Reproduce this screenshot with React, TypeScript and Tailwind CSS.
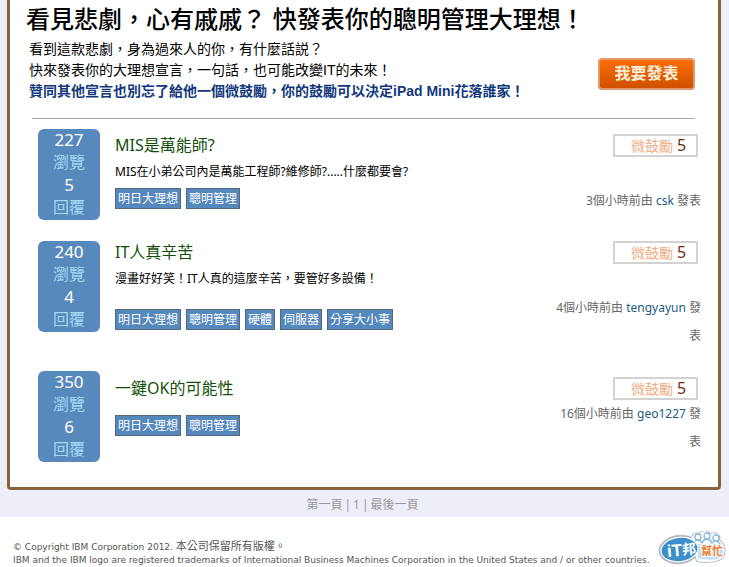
interface Post {
  views: number;
  replies: number;
  title: string;
  summary?: string;
  tags: string[];
  votes: number;
  age: string;
  author: string;
}

const posts: Post[] = [
  {
    views: 227,
    replies: 5,
    title: "MIS是萬能師?",
    summary: "MIS在小弟公司內是萬能工程師?維修師?.....什麼都要會?",
    tags: ["明日大理想", "聰明管理"],
    votes: 5,
    age: "3個小時前",
    author: "csk",
  },
  {
    views: 240,
    replies: 4,
    title: "IT人真辛苦",
    summary: "漫畫好好笑！IT人真的這麼辛苦，要管好多設備！",
    tags: ["明日大理想", "聰明管理", "硬體", "伺服器", "分享大小事"],
    votes: 5,
    age: "4個小時前",
    author: "tengyayun",
  },
  {
    views: 350,
    replies: 6,
    title: "一鍵OK的可能性",
    tags: ["明日大理想", "聰明管理"],
    votes: 5,
    age: "16個小時前",
    author: "geo1227",
  },
];

function PostRow({ post }: { post: Post }) {
  return (
    <li className="flex gap-[15px]">
      <div className="w-[62px] shrink-0 self-start rounded-md bg-[#5889bd] pb-px text-center text-base leading-[23px] text-[#a2d9f0]">
        <div className="text-[17px] leading-[22px] text-white">{post.views}</div>
        <div>瀏覽</div>
        <div className="text-[17px] leading-[22px] text-white">{post.replies}</div>
        <div>回覆</div>
      </div>
      <div className="flex min-w-0 flex-1 flex-col justify-center">
        <div className="flex items-center justify-between">
          <h2 className="text-base leading-[23px]">
            <a href="#" className="text-[#12500a]">{post.title}</a>
          </h2>
          <button
            type="button"
            className="mr-[3px] flex h-[23px] w-[85px] items-center justify-center gap-1 border-2 border-[#d2d2d2] pl-[6px] text-sm leading-[19px] text-[#efae84]"
          >
            微鼓勵
            <span className="text-base leading-[19px] text-[#6b2c10]">{post.votes}</span>
          </button>
        </div>
        {post.summary && (
          <p className="text-xs leading-[30px] text-black">{post.summary}</p>
        )}
        <div className="flex items-center justify-between">
          <ul className="flex gap-[5px] pb-[6px]">
            {post.tags.map((tag) => (
              <li key={tag}>
                <a
                  href="#"
                  className="block border border-[#56687c] bg-[#5588bd] px-[2px] text-xs leading-[19px] text-white"
                >
                  {tag}
                </a>
              </li>
            ))}
          </ul>
          <p className="w-[150px] text-right text-xs leading-7 text-[#666]">
            {post.age}由{" "}
            <a href="#" className="text-[#245b84]">{post.author}</a> 發表
          </p>
        </div>
      </div>
    </li>
  );
}

function Logo() {
  return (
    <svg viewBox="0 0 68 36" className="h-9 w-[68px]" role="img" aria-label="iT邦幫忙">
      <g fill="#fff" stroke="#b3bcc4" strokeWidth="2">
        <path d="M34 13C32 5 36 1 41 3C44 -1 50 0 52 3C57 1 63 4 61 9C67 13 68 20 65 26C62 31 47 32 39 30Z" />
        <ellipse cx="21.500" cy="18.500" rx="20" ry="13.500" transform="rotate(-7 21.500 18.500)" />
      </g>
      <path
        d="M34 13C32 5 36 1 41 3C44 -1 50 0 52 3C57 1 63 4 61 9C67 13 68 20 65 26C62 31 47 32 39 30Z"
        fill="#fff"
      />
      <path d="M40 13L62 12C66 16 66 22 63 26C58 30 48 29 40 27Z" fill="#c3e0f4" />
      <g fill="#fff" stroke="#86b9dc" strokeWidth="1.3">
        <circle cx="40" cy="6" r="3" />
        <circle cx="49" cy="5" r="3" />
        <circle cx="58" cy="7" r="3" />
        <path d="M35 13C37 8 42 8 44 12C46 7 52 7 54 12C56 9 61 9 62 14" />
      </g>
      <ellipse cx="21.500" cy="18.500" rx="19" ry="12.500" fill="#fff" transform="rotate(-7 21.500 18.500)" />
      <ellipse cx="21.500" cy="18.500" rx="18" ry="11.500" fill="#3d8fca" transform="rotate(-7 21.500 18.500)" />
      <g className="font-['Liberation_Sans','Noto_Sans_CJK_TC',sans-serif] font-bold">
        <text x="9" y="25" fontSize="17" fill="#fff" transform="rotate(-5 21 19)">
          iT
        </text>
        <text x="24" y="24" fontSize="14" fill="#fff" transform="rotate(-5 21 19)">
          邦
        </text>
        <text
          x="43"
          y="24"
          fontSize="11"
          fill="#ee7a2b"
          stroke="#fff"
          strokeWidth="2"
          paintOrder="stroke"
        >
          幫忙
        </text>
      </g>
    </svg>
  );
}

export default function App() {
  return (
    <div className="relative bg-white font-['Noto_Sans','Noto_Sans_CJK_TC',sans-serif]">
      <div className="bg-[#eeeef8]">
        <main className="mr-2 ml-[7px] rounded-b border-x-[3px] border-b-[3px] border-[#8b6239] bg-white pr-[17px] pb-[25px] pl-7">
          <header className="-ml-3 font-['Liberation_Sans','Noto_Sans_CJK_TC',sans-serif] text-black">
            <h1 className="text-2xl leading-[39px] font-medium">
              看見悲劇，心有戚戚？ 快發表你的聰明管理大理想！
            </h1>
            <div className="flex items-end justify-between pr-[6px] pl-[3px]">
              <div className="text-sm leading-[21px]">
                <p>看到這款悲劇，身為過來人的你，有什麼話説？</p>
                <p>快來發表你的大理想宣言，一句話，也可能改變IT的未來！</p>
                <p className="font-bold text-[#12397c]">
                  贊同其他宣言也別忘了給他一個微鼓勵，你的鼓勵可以決定iPad Mini花落誰家！
                </p>
              </div>
              <button
                type="button"
                className="mb-3 h-8 w-[97px] rounded border-2 border-[#dc9a70] bg-linear-to-b from-[#fb6d08] to-[#cf5000] text-base leading-7 font-bold text-[#fff0dc]"
              >
                我要發表
              </button>
            </div>
          </header>
          <hr className="mt-4 mr-[6px] -ml-[6px] border-[#aaa]" />
          <ul className="mt-[10px] flex flex-col gap-[21px]">
            {posts.map((post) => (
              <PostRow key={post.title} post={post} />
            ))}
          </ul>
        </main>
        <nav className="flex justify-center gap-[2px] pt-[6px] pr-1 pb-[3px] text-xs leading-[18px] text-[#999]">
          <a href="#">第一頁</a>|<a href="#">1</a>|<a href="#">最後一頁</a>
        </nav>
      </div>
      <footer className="px-[13px] pt-[23px] pb-px font-['DejaVu_Sans','Noto_Sans_CJK_TC',sans-serif] text-[9px] leading-[13px] text-[#555]">
        <p>
          © Copyright IBM Corporation 2012. <span className="text-[11px] leading-[13px]">本公司保留所有版權。</span>
        </p>
        <p>
          IBM and the IBM logo are registered trademarks of International Business Machines
          Corporation in the United States and / or other countries.
        </p>
      </footer>
      <a href="#" className="absolute right-[3px] bottom-px">
        <Logo />
      </a>
    </div>
  );
}
